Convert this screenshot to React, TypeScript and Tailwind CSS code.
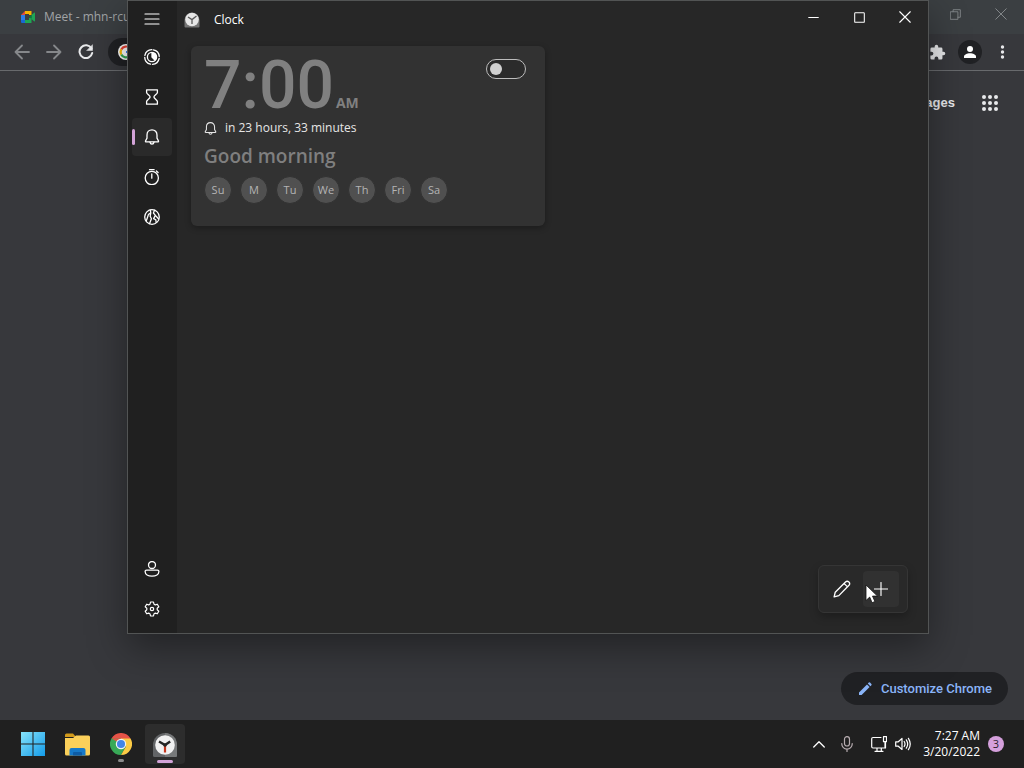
import type { ReactNode } from "react";

function Icon({ size = 16, width = 1.3, className = "", children }: { size?: number; width?: number; className?: string; children: ReactNode }) {
  return (
    <svg width={size} height={size} viewBox="0 0 16 16" fill="none" stroke="currentColor" strokeWidth={width} strokeLinecap="round" strokeLinejoin="round" className={`shrink-0 ${className}`} aria-hidden="true">
      {children}
    </svg>
  );
}

const bell = (
  <>
    <path d="M8 .8C5 .8 3 3.1 3 5.9v3.2L1.5 12c-.2.5.1.9.6.9h11.8c.5 0 .8-.4.6-.9L13 9.1V5.9C13 3.1 11 .8 8 .8Z" />
    <path d="M6 13.1c.2 1.2 1 2 2 2s1.8-.8 2-2" />
  </>
);

const pages = [
  {
    label: "Focus sessions",
    icon: (
      <>
        <circle cx="8" cy="8" r="7.3" strokeDasharray="9.5 2" transform="rotate(-80 8 8)" />
        <circle cx="8" cy="8" r="4.6" />
        <path d="M8 3.8a4.2 4.2 0 0 1 2.9 7.2L8 8Z" fill="currentColor" />
      </>
    ),
  },
  {
    label: "Timer",
    icon: <path d="M2.6.8h10.8v2.7c0 1.5-3.5 3.1-3.5 4.5s3.5 3 3.5 4.5v2.7H2.6v-2.7C2.6 11 6.1 9.4 6.1 8S2.6 5 2.6 3.5Z" />,
  },
  { label: "Alarm", icon: bell },
  {
    label: "Stopwatch",
    icon: (
      <>
        <circle cx="7.8" cy="9" r="6.6" />
        <path d="M5.5.7h4.6M7.8 5v4.2M12.4 2l1.7 1.5" />
      </>
    ),
  },
  {
    label: "World clock",
    icon: (
      <>
        <circle cx="8" cy="8" r="7.3" />
        <path d="M6.300 1.200 6.800 3.800 4.400 5.600 3.200 9.200l-1 2.800M6.800 3.800l-.600 3.400 1.200 2.600-1.800 4.800M10.400 1.400 9.400 4l2 2.400-1.800 3.200 2.200 1.200.400 2.600M11.400 6.400l3 3.400" />
      </>
    ),
  },
];

const days = [
  { short: "Su", name: "Sunday" },
  { short: "M", name: "Monday" },
  { short: "Tu", name: "Tuesday" },
  { short: "We", name: "Wednesday" },
  { short: "Th", name: "Thursday" },
  { short: "Fri", name: "Friday" },
  { short: "Sa", name: "Saturday" },
];

function ClockLogo({ size }: { size: number }) {
  return (
    <svg width={size} height={size} viewBox="0 0 24 24" className="shrink-0" aria-hidden="true">
      <path d="M0 12A12 12 0 0 1 12 0h0a12 12 0 0 1 12 12v10.500a1.500 1.500 0 0 1-1.500 1.500h-21A1.500 1.500 0 0 1 0 22.500Z" fill="#626466" />
      <path d="M12 0a12 12 0 0 1 12 12v10.500a1.500 1.500 0 0 1-1.500 1.500H12Z" fill="#77797a" />
      <circle cx="12" cy="12" r="9.800" fill="#f1f1f1" />
      <path d="M12 12v7.500" stroke="#c6361d" strokeWidth="2.200" />
      <path d="m6 8.500 6 3.500 5.200-3.500" fill="none" stroke="#262626" strokeWidth="2.400" />
      <circle cx="12" cy="12" r="1.800" fill="#262626" />
    </svg>
  );
}

function SmallClockLogo() {
  return (
    <svg width="16" height="16" viewBox="0 0 16 16" className="shrink-0" aria-hidden="true">
      <path d="M.5 8a7.500 7.500 0 0 1 15 0v6.500a1 1 0 0 1-1 1h-13a1 1 0 0 1-1-1Z" fill="#747474" />
      <circle cx="8" cy="7.500" r="6.800" fill="#e6e6e6" />
      <path d="m4 5 4 2.600L12.500 4M8 7.500V12" fill="none" stroke="#5a5a5a" strokeWidth="1.300" />
    </svg>
  );
}

function ChromeLogo() {
  return (
    <svg width="22" height="22" viewBox="0 0 24 24" aria-hidden="true">
      <path d="M12 12 1.600 6A12 12 0 0 1 22.400 6Z" fill="#e65347" />
      <path d="M1.600 6A12 12 0 0 0 12 24l5.200-9L12 12Z" fill="#38a957" />
      <path d="M22.400 6H12l5.200 9L12 24A12 12 0 0 0 22.400 6Z" fill="#fccb45" />
      <path d="M1.600 6 6.800 15 12 12V6Z" fill="#38a957" />
      <path d="M1.600 6h20.800H12L6.800 9Z" fill="#e65347" />
      <circle cx="12" cy="12" r="5.700" fill="#f3f3f3" />
      <circle cx="12" cy="12" r="4.400" fill="#4385e8" />
    </svg>
  );
}

function Browser() {
  return (
    <section aria-label="Browser" className="flex grow flex-col bg-[#37383c]">
      <div className="flex h-[34px] items-center justify-between bg-[#3b3f42] text-[#a1a4a6]">
        <div className="flex items-center gap-2 pl-5 text-xs">
          <svg width="16" height="16" viewBox="0 0 16 16" aria-hidden="true">
            <path d="M1 6 5 2v4Z" fill="#e34a3b" />
            <path d="M5 2h6.500v4H9V5H5Z" fill="#f4b400" />
            <path d="M1 6h4v5H1Z" fill="#2b7de9" />
            <path d="M1 11h4v3H2a1 1 0 0 1-1-1Z" fill="#1967d2" />
            <path d="M5 11h4V9h2.500v5H5ZM11.500 6 14 3.700q1-.5 1 .5v7.600q0 1-1 .5L11.500 10Z" fill="#1fa653" />
            <path d="M9 8 11.500 6v4Z" fill="#087d3e" />
          </svg>
          <span>Meet - mhn-rcu</span>
        </div>
        <div className="flex pb-1.5 text-[#85898b]">
          <button aria-label="Restore browser" className="flex h-7 w-[46px] items-center justify-center">
            <Icon size={11} width={1.300}><path d="M1 4h10.500v11H1ZM4.500 4V1H15v11h-3.500" /></Icon>
          </button>
          <button aria-label="Close browser" className="flex h-7 w-[46px] items-center justify-center">
            <Icon size={12}><path d="m1 1 14 14M15 1 1 15" /></Icon>
          </button>
        </div>
      </div>
      <div className="flex h-[37px] items-center border-b border-[#686a6d] pr-3 pl-3 text-[#e8e9eb]">
        <button aria-label="Back" className="flex w-8 pl-0.5 text-[#86888b]"><Icon width={1.800}><path d="M15 8H1.500M8 1.500 1.500 8 8 14.500" /></Icon></button>
        <button aria-label="Forward" className="flex w-8 pl-0.5 text-[#86888b]"><Icon width={1.800}><path d="M1 8h13.500M8 1.500 14.500 8 8 14.500" /></Icon></button>
        <button aria-label="Reload" className="flex w-8 pl-0.5">
          <Icon width={2}><path d="M13.500 4.500A6.400 6.400 0 1 0 14.200 9" /><path d="M14.500 1v5.500H9Z" fill="currentColor" strokeWidth="0.500" /></Icon>
        </button>
        <div className="flex h-7 grow items-center rounded-full bg-[#202124] pl-2.5">
          <svg width="16" height="16" viewBox="0 0 16 16" aria-hidden="true">
            <circle cx="8" cy="8" r="8" fill="#fff" />
            <g fill="none" strokeWidth="2.200">
              <path d="M12 4.200A5.400 5.400 0 0 0 3.300 5.400" stroke="#ea4335" />
              <path d="M3.300 5.400a5.400 5.400 0 0 0 0 5.200" stroke="#fbbc05" />
              <path d="M3.300 10.600a5.400 5.400 0 0 0 8.400 1.300" stroke="#34a853" />
              <path d="M11.700 11.900A5.400 5.400 0 0 0 13.400 8H8" stroke="#4285f4" />
            </g>
          </svg>
        </div>
        <div className="flex items-center pl-2">
          <button aria-label="Extensions" className="mr-3">
            <svg width="17" height="17" viewBox="0 0 24 24" fill="currentColor" aria-hidden="true">
              <path d="M20.500 11H19V7a2 2 0 0 0-2-2h-4V3.500a2.500 2.500 0 0 0-5 0V5H4a2 2 0 0 0-2 2v3.800h1.500a2.700 2.700 0 0 1 0 5.400H2V20a2 2 0 0 0 2 2h3.800v-1.500a2.700 2.700 0 0 1 5.400 0V22H17a2 2 0 0 0 2-2v-4h1.500a2.500 2.500 0 0 0 0-5Z" />
            </svg>
          </button>
          <button aria-label="Profile" className="mr-1.5 flex size-6 items-center justify-center rounded-full bg-[#202124] text-white">
            <svg width="12" height="12" viewBox="0 0 12 12" fill="currentColor" aria-hidden="true"><circle cx="6" cy="3" r="3" /><path d="M0 12v-1.500C0 8.500 3 7.200 6 7.200s6 1.300 6 3.300V12Z" /></svg>
          </button>
          <button aria-label="Menu" className="flex w-6 justify-end">
            <svg width="19" height="16" viewBox="0 0 19 16" fill="currentColor" aria-hidden="true"><circle cx="9.500" cy="3" r="1.700" /><circle cx="9.500" cy="8" r="1.700" /><circle cx="9.500" cy="13" r="1.700" /></svg>
          </button>
        </div>
      </div>
      <nav aria-label="Google" className="flex items-center justify-end gap-[27px] pt-[23px] pr-[26px]">
        <a href="#images" className="font-['Liberation_Sans',sans-serif] text-[13px] leading-[18px] font-bold text-[#e8e9eb]">Images</a>
        <button aria-label="Google apps" className="text-[#e8e9eb]">
          <svg width="16" height="16" viewBox="0 0 16 16" fill="currentColor" aria-hidden="true">
            {[2, 8, 14].map((y) => [2, 8, 14].map((x) => <circle key={`${x}-${y}`} cx={x} cy={y} r="2" />))}
          </svg>
        </button>
      </nav>
      <div className="mt-auto flex justify-end pr-4 pb-[15px]">
        <button className="flex h-[33px] items-center gap-2 rounded-full bg-[#202124] pr-4 pl-4 font-[Roboto,sans-serif] text-[13px] font-medium text-[#8ab4f8]">
          <svg width="16" height="16" viewBox="0 0 16 16" fill="#8ab4f8" aria-hidden="true"><path d="M2 11.400 10 3.400l2.600 2.600-8 8H2ZM10.800 2.600l1-1q.6-.5 1.200 0L14.400 3q.5.600 0 1.200l-1 1Z" /></svg>
          Customize Chrome
        </button>
      </div>
    </section>
  );
}

function AlarmCard() {
  return (
    <article className="flex w-[354px] max-w-full flex-col rounded-md bg-[#323232] pt-2.5 pr-[15px] pb-[22px] pl-[13px] shadow-[0_2px_6px_rgba(0,0,0,0.3)]">
      <div className="flex items-start justify-between">
        <div className="flex items-baseline gap-0.5 text-[#808080]">
          <span className="font-[Roboto,sans-serif] text-[66px] leading-[60px] font-medium">7:00</span>
          <span className="text-sm leading-5 font-bold">AM</span>
        </div>
        <label className="mt-[3px] mr-1 flex cursor-pointer">
          <input type="checkbox" role="switch" aria-label="Good morning alarm" className="peer sr-only" />
          <span className="flex h-5 w-10 items-center rounded-full border border-[#bdbdbd] bg-[#2b2b2b] px-[3px] peer-checked:justify-end">
            <span className="size-3 rounded-full bg-[#d0d0d0]" />
          </span>
        </label>
      </div>
      <p className="flex h-6 items-center gap-2 text-xs text-[#e6e6e6]">
        <Icon size={13}>{bell}</Icon>
        in 23 hours, 33 minutes
      </p>
      <h2 className="text-[19px] leading-8 font-semibold text-[#7f7f7f]">Good morning</h2>
      <ul className="mt-1 flex gap-2">
        {days.map((day) => (
          <li key={day.short}>
            <button aria-label={day.name} className="flex size-7 items-center justify-center rounded-full border border-[#323232] bg-[#505050] text-[11px] text-[#b4b4b4]">{day.short}</button>
          </li>
        ))}
      </ul>
    </article>
  );
}

function ClockWindow() {
  return (
    <section aria-label="Clock" className="absolute top-0 right-[95px] bottom-[134px] left-[127px] flex border border-[#525454] bg-[#272727] text-white shadow-[0_14px_36px_rgba(0,0,0,0.38)]">
      <nav aria-label="Clock pages" className="flex w-[49px] shrink-0 flex-col bg-[#202020] px-1">
        <button aria-label="Open navigation" className="flex h-9 w-10 items-center justify-center">
          <Icon width={1.200}><path d="M1 3h14M1 8h14M1 13h14" /></Icon>
        </button>
        {pages.map((page) => (
          <button
            key={page.label}
            aria-label={page.label}
            aria-current={page.label === "Alarm" ? "page" : undefined}
            className="group flex h-10 w-10 items-center py-px aria-[current=page]:text-white"
          >
            <span className="flex h-full w-full items-center rounded group-aria-[current=page]:bg-[#2a2a2a]">
              <span className="h-4 w-[3px] rounded-full group-aria-[current=page]:bg-[#d3a3d8]" />
              <span className="flex grow justify-center pr-[3px]"><Icon>{page.icon}</Icon></span>
            </span>
          </button>
        ))}
        <div className="mt-auto flex flex-col pb-1">
          <button aria-label="Account" className="flex h-10 w-10 items-center justify-center">
            <Icon><circle cx="8" cy="4" r="3.500" /><path d="M2.500 9.200h11q1.400 0 1.400 1.400c0 2.700-3 4.600-6.900 4.600s-6.900-1.900-6.900-4.600q0-1.400 1.400-1.400Z" /></Icon>
          </button>
          <button aria-label="Settings" className="flex h-10 w-10 items-center justify-center">
            <Icon width={1.200}>
              <circle cx="8" cy="8" r="1.700" />
              <path d="m6.500 1-.4 2-1.400.9-2-.7-1.500 2.600L2.800 7.200v1.600l-1.600 1.400 1.500 2.600 2-.7 1.400.9.4 2h3l.4-2 1.400-.9 2 .7 1.500-2.600-1.600-1.400V7.200l1.600-1.400-1.500-2.600-2 .7L9.900 3l-.4-2Z" />
            </Icon>
          </button>
        </div>
      </nav>
      <div className="flex min-w-0 grow flex-col">
        <header className="flex items-start justify-between pl-[7px]">
          <div className="flex h-9 items-center gap-[14px] pt-0.5">
            <SmallClockLogo />
            <h1 className="text-xs">Clock</h1>
          </div>
          <div className="flex">
            <button aria-label="Minimize" className="flex h-8 w-[46px] items-center justify-center"><Icon size={11} width={1.500}><path d="M1 8h14" /></Icon></button>
            <button aria-label="Maximize" className="flex h-8 w-[46px] items-center justify-center"><Icon size={11} width={1.500}><rect x="1" y="1" width="14" height="14" rx="1" /></Icon></button>
            <button aria-label="Close" className="flex h-8 w-[46px] items-center justify-center"><Icon size={12} width={1.500}><path d="m1 1 14 14M15 1 1 15" /></Icon></button>
          </div>
        </header>
        <main className="flex grow flex-col items-start pt-[9px] pr-5 pb-5 pl-[14px]">
          <AlarmCard />
          <div className="relative mt-auto ml-auto flex h-12 items-center gap-0.5 rounded-md border border-[#353535] bg-[#292929] pr-2 pl-1 shadow-[0_4px_8px_rgba(0,0,0,0.25)]">
            <button aria-label="Edit alarms" className="flex h-9 w-[38px] items-center justify-center">
              <Icon size={18} width={1.200}><path d="M1 15 2 10.800 11.100 1.700q1.500-1.300 3 0 1.400 1.500.1 3L5.200 13.900ZM9.800 3l3.100 3.100" /></Icon>
            </button>
            <button aria-label="Add an alarm" className="flex h-9 w-9 items-center justify-center rounded bg-[#313131]">
              <Icon size={14} width={1.300}><path d="M8 .5v15M.5 8h15" /></Icon>
            </button>
            <svg width="14" height="20" viewBox="0 0 14 20" className="absolute top-[18px] left-[46px]" aria-hidden="true">
              <path d="M1 1v15.500l3.700-3.400 2.400 5.600 2.800-1.200-2.400-5.400h5Z" fill="#fff" stroke="#111" strokeWidth="0.800" />
            </svg>
          </div>
        </main>
      </div>
    </section>
  );
}

function Taskbar() {
  return (
    <footer className="flex h-12 shrink-0 items-center justify-between bg-[#202020] pr-5 pl-[13px] text-white">
      <div className="flex gap-1">
        <button aria-label="Start" className="flex size-10 items-center justify-center">
          <svg width="24" height="24" viewBox="0 0 23 23" aria-hidden="true">
            <defs><linearGradient id="start" x2="1" y2="1"><stop stopColor="#86e3fb" /><stop offset="1" stopColor="#139be9" /></linearGradient></defs>
            <path d="M0 0h11v11H0ZM12 0h11v11H12ZM0 12h11v11H0ZM12 12h11v11H12Z" fill="url(#start)" />
          </svg>
        </button>
        <button aria-label="File Explorer" className="flex size-10 items-center justify-center">
          <svg width="25" height="23" viewBox="0 0 25 23" aria-hidden="true">
            <path d="M0 2q0-1.500 1.500-1.500H8L11 4H0Z" fill="#d29a1b" />
            <path d="M0 5h8l3-2.500h12.500Q25 2.500 25 4v17q0 1.500-1.500 1.500h-22Q0 22.500 0 21Z" fill="#fbd05a" />
            <path d="M4.500 22.500V17q0-2 2-2h12q2 0 2 2v5.500Z" fill="#1679c9" />
            <path d="M8 22.500v-2.500q0-1 1-1h7q1 0 1 1v2.500Z" fill="#0e5ca5" />
          </svg>
        </button>
        <button aria-label="Google Chrome" className="flex size-10 flex-col items-center justify-end gap-1 pb-0.5">
          <ChromeLogo />
          <span className="h-[3px] w-1.5 rounded-full bg-[#8c8c8c]" />
        </button>
        <button aria-label="Clock" className="flex size-10 flex-col items-center justify-end gap-[3px] rounded bg-[#2d2d2d] pb-px">
          <ClockLogo size={24} />
          <span className="h-[3px] w-4 rounded-full bg-[#d3a3d8]" />
        </button>
      </div>
      <div className="flex items-center text-xs">
        <button aria-label="Show hidden icons" className="flex w-7 justify-center"><Icon size={12} width={1.700}><path d="m1 12 7-7 7 7" /></Icon></button>
        <button aria-label="Microphone" className="flex w-7 justify-center text-[#b9aeb2]">
          <Icon width={1.200}><rect x="5.500" y=".7" width="5" height="9.300" rx="2.500" /><path d="M2.800 7.500v.5a5.200 5.200 0 0 0 10.400 0v-.5M8 13.200v2.200" /></Icon>
        </button>
        <div className="ml-2.5 flex gap-2">
          <button aria-label="Network"><Icon width={1.200}><path d="M10 1.500H2Q.7 1.500.7 2.800v8Q.7 12 2 12h12.500V6.500M4 15.300h8M6 12v3.300M10.300 12v3.300M12.500.7h3v5h-3ZM14 5.700V12" /></Icon></button>
          <button aria-label="Volume"><Icon width={1.200}><path d="M.7 5.800h2.600L7 2.500v11l-3.700-3.300H.7ZM9.200 5.500q1.600 2.500 0 5M11.300 3.800q2.800 4.200 0 8.400M13.400 2.300q3.700 5.700 0 11.400" /></Icon></button>
        </div>
        <time dateTime="2022-03-20T07:27" className="ml-3 text-right leading-4">7:27 AM<br />3/20/2022</time>
        <span className="ml-2 flex size-4 items-center justify-center rounded-full bg-[#d5a0dc] text-[11px] text-[#2b202d]">3</span>
      </div>
    </footer>
  );
}

export default function App() {
  return (
    <div className="relative flex min-h-screen flex-col overflow-hidden bg-[#202020] font-['Open_Sans','Noto_Sans',sans-serif]">
      <Browser />
      <ClockWindow />
      <Taskbar />
    </div>
  );
}
